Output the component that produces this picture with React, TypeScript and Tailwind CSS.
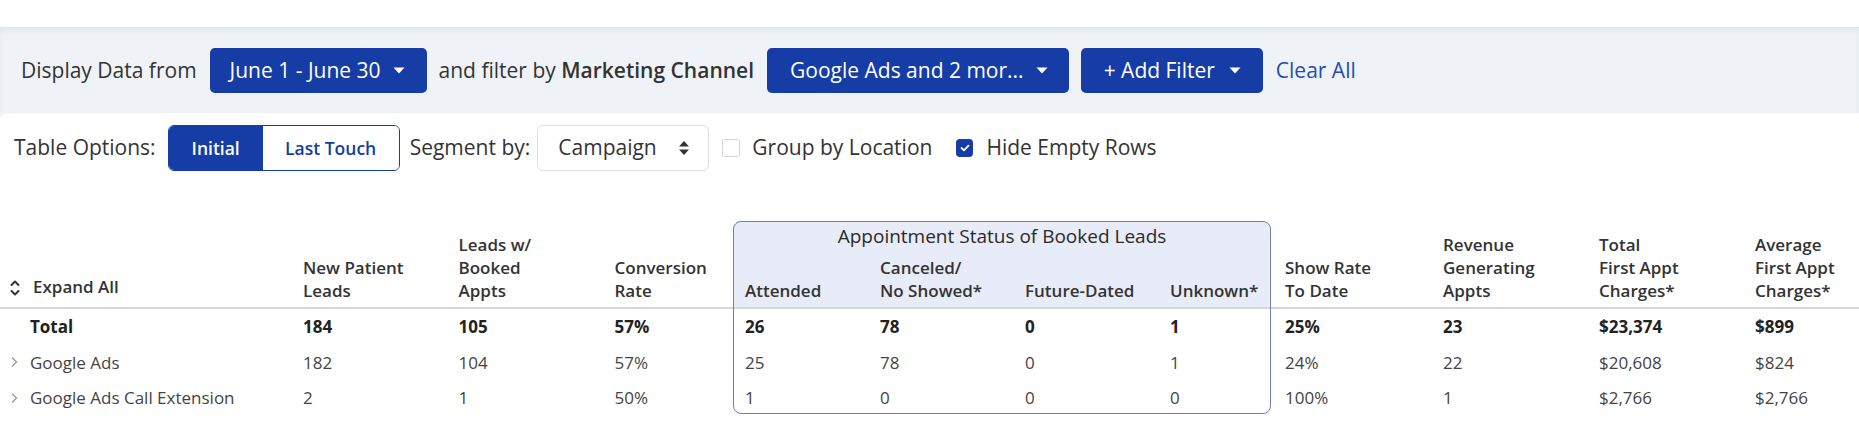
import React from "react";

const BLUE = "bg-[#163ca6]";

function Caret() {
  return (
    <svg width="12" height="7" viewBox="0 0 12 7" className="shrink-0">
      <path d="M0.5 0.5 L11.5 0.5 L6 6.5 Z" fill="white" />
    </svg>
  );
}

function UpDown() {
  return (
    <svg width="12" height="16" viewBox="0 0 12 16" className="shrink-0">
      <path d="M1 6.5 L6 1 L11 6.5 Z" fill="#333" />
      <path d="M1 9.5 L6 15 L11 9.5 Z" fill="#333" />
    </svg>
  );
}

function ChevronRight() {
  return (
    <svg width="8" height="10" viewBox="0 0 8 10" className="shrink-0">
      <path d="M1.5 1 L5.5 5 L1.5 9" fill="none" stroke="#9a9a9a" strokeWidth="1.4" strokeLinecap="round" strokeLinejoin="round" />
    </svg>
  );
}

function ChevronsUpDown() {
  return (
    <svg width="10" height="20" viewBox="0 0 10 20" className="shrink-0">
      <path d="M1.5 7 L5 3.5 L8.5 7" fill="none" stroke="#333" strokeWidth="2" strokeLinecap="round" strokeLinejoin="round" />
      <path d="M1.5 13 L5 16.5 L8.5 13" fill="none" stroke="#333" strokeWidth="2" strokeLinecap="round" strokeLinejoin="round" />
    </svg>
  );
}

const colStart = [
  "col-start-1",
  "col-start-2",
  "col-start-3",
  "col-start-4",
  "col-start-5",
  "col-start-6",
  "col-start-7",
  "col-start-8",
  "col-start-9",
  "col-start-10",
  "col-start-11",
  "col-start-12",
];
const rowStart = ["row-start-1", "row-start-2", "row-start-3", "row-start-4", "row-start-5", "row-start-6"];

type Header = { lines: string[]; boxed: boolean };

const headers: Header[] = [
  { lines: ["New Patient", "Leads"], boxed: false },
  { lines: ["Leads w/", "Booked", "Appts"], boxed: false },
  { lines: ["Conversion", "Rate"], boxed: false },
  { lines: ["Attended"], boxed: true },
  { lines: ["Canceled/", "No Showed*"], boxed: true },
  { lines: ["Future-Dated"], boxed: true },
  { lines: ["Unknown*"], boxed: true },
  { lines: ["Show Rate", "To Date"], boxed: false },
  { lines: ["Revenue", "Generating", "Appts"], boxed: false },
  { lines: ["Total", "First Appt", "Charges*"], boxed: false },
  { lines: ["Average", "First Appt", "Charges*"], boxed: false },
];

const rows = [
  { name: "Total", bold: true, vals: ["184", "105", "57%", "26", "78", "0", "1", "25%", "23", "$23,374", "$899"] },
  { name: "Google Ads", bold: false, vals: ["182", "104", "57%", "25", "78", "0", "1", "24%", "22", "$20,608", "$824"] },
  { name: "Google Ads Call Extension", bold: false, vals: ["2", "1", "50%", "1", "0", "0", "0", "100%", "1", "$2,766", "$2,766"] },
];

export default function App() {
  return (
    <div className="w-[1859px] h-[431px] overflow-hidden bg-white font-['Open_Sans',sans-serif] text-[#333]">
      <div className="h-[27px] bg-white" />
      {/* Filter bar */}
      <div className="bg-[#eff3f7] shadow-[inset_0_3px_5px_rgba(30,50,80,0.06)] border-t border-[#e2e7ec]">
        <div className="h-[85px] flex items-center pl-[21px] text-[21px]">
          <span className="mr-[13px]">Display Data from</span>
          <button className={`${BLUE} h-[45px] rounded-[5px] text-white pl-[20px] pr-[22px] flex items-center gap-[12px] mr-[12px]`}>
            <span>June 1 - June 30</span>
            <Caret />
          </button>
          <span className="mr-[13px]">
            and filter by <span className="font-semibold">Marketing Channel</span>
          </span>
          <button className={`${BLUE} h-[45px] rounded-[5px] text-white pl-[23px] pr-[21px] flex items-center gap-[12px] mr-[12px]`}>
            <span>Google Ads and 2 mor...</span>
            <Caret />
          </button>
          <button className={`${BLUE} h-[45px] rounded-[5px] text-white pl-[23px] pr-[22px] flex items-center gap-[14px] mr-[13px]`}>
            <span>+ Add Filter</span>
            <Caret />
          </button>
          <span className="text-[#1f4cb3]">Clear All</span>
        </div>
      </div>
      {/* Panel */}
      <div className="bg-[#eff3f7]">
        <div className="bg-white rounded-tl-[8px] pt-[12px]">
          <div className="h-[46px] flex items-center pl-[14px] text-[21px]">
            <span className="mr-[12px]">Table Options:</span>
            <div className="flex h-[46px] border border-[#163ca6] rounded-[6px] overflow-hidden text-[17.5px] font-semibold mr-[10px]">
              <div className={`${BLUE} text-white w-[94px] flex items-center justify-center`}>Initial</div>
              <div className="bg-white text-[#163ca6] w-[136px] flex items-center justify-center">Last Touch</div>
            </div>
            <span className="mr-[7px]">Segment by:</span>
            <div className="h-[46px] w-[172px] border border-[#dcdfe4] rounded-[6px] flex items-center justify-between pl-[20px] pr-[18px] mr-[13px]">
              <span>Campaign</span>
              <UpDown />
            </div>
            <div className="w-[18px] h-[18px] border border-[#d4d7dc] rounded-[3px] bg-white mr-[12px]" />
            <span className="mr-[24px]">Group by Location</span>
            <div className={`${BLUE} w-[17px] h-[18px] rounded-[4px] flex items-center justify-center mr-[13px]`}>
              <svg width="10" height="8" viewBox="0 0 10 8">
                <path d="M1.5 4 L4 6.3 L8.5 1.7" fill="none" stroke="white" strokeWidth="1.8" strokeLinecap="round" strokeLinejoin="round" />
              </svg>
            </div>
            <span>Hide Empty Rows</span>
          </div>

          {/* Table */}
          <div className="mt-[50px] grid grid-cols-[291px_155.5px_156px_130.5px_135px_145px_145px_113px_160px_156px_156px_1fr] grid-rows-[31px_55px_2px_35.5px_35.5px_35.5px] text-[17px]">
            <div className="col-start-5 col-end-9 row-start-1 row-end-3 bg-[#e8ebf8] rounded-t-[8px]" />
            <div className="col-start-1 col-end-13 row-start-3 bg-[#d4d6da]" />
            <div className="col-start-5 col-end-9 row-start-1 flex items-center justify-center text-[19px] font-medium leading-[23px] text-[#2a2a2a]">
              Appointment Status of Booked Leads
            </div>
            <div className="col-start-1 row-start-1 row-end-3 flex items-end pb-[9px] pl-[10px] gap-[13px] font-semibold leading-[23px]">
              <ChevronsUpDown />
              <span>Expand All</span>
            </div>
            {headers.map((h, i) => (
              <div
                key={i}
                className={`${colStart[i + 1]} ${h.boxed ? "row-start-2" : "row-start-1 row-end-3"} flex flex-col justify-end pb-[5px] ${i === 7 ? "pl-[14px]" : "pl-[12px]"} font-semibold leading-[23px] text-[#333] whitespace-nowrap`}
              >
                {h.lines.map((l, j) => (
                  <span key={j}>{l}</span>
                ))}
              </div>
            ))}
            {rows.map((r, ri) => (
              <React.Fragment key={ri}>
                <div className={`col-start-1 ${rowStart[ri + 3]} flex items-center pl-[11px] whitespace-nowrap ${r.bold ? "font-bold text-[#222]" : "text-[#444]"}`}>
                  <span className="w-[19px] flex items-center">{r.bold ? null : <ChevronRight />}</span>
                  <span>{r.name}</span>
                </div>
                {r.vals.map((v, vi) => (
                  <div
                    key={vi}
                    className={`${colStart[vi + 1]} ${rowStart[ri + 3]} flex items-center ${vi === 7 ? "pl-[14px]" : "pl-[12px]"} ${r.bold ? "font-bold text-[#222]" : "text-[#444]"}`}
                  >
                    {v}
                  </div>
                ))}
              </React.Fragment>
            ))}
            <div className="col-start-5 col-end-9 row-start-1 row-end-7 mb-[2px] border-[1.5px] border-[#6f80b9] rounded-[8px] pointer-events-none" />
          </div>
        </div>
      </div>
    </div>
  );
}
